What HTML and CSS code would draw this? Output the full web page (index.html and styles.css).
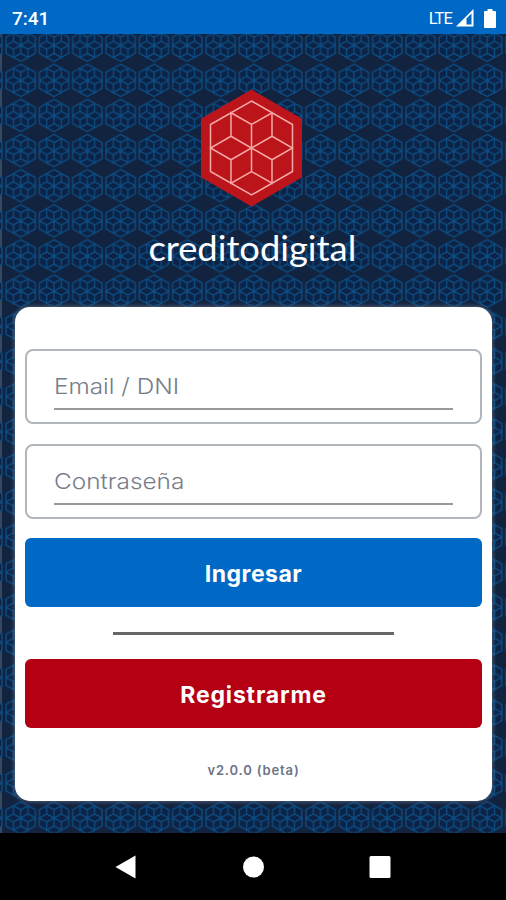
FILE: index.html
```html
<!DOCTYPE html>
<html lang="es">
<head>
<meta charset="utf-8">
<title>creditodigital</title>
<link rel="stylesheet" href="styles.css">
</head>
<body>
<header class="status">
  <span class="clock">7:41</span>
  <span class="network">LTE</span>
  <svg class="signal" width="18" height="18" viewBox="0 0 18 18"><path d="M0 17.5 17.5 0v17.5z" fill="#fff"/><path d="M10.500 9.500 15.500 4.500v11h-5z" fill="#0068c5"/></svg>
  <svg class="battery" width="12" height="19" viewBox="0 0 12 19"><path d="M3.500 0h5v2H11q1 0 1 1v15q0 1-1 1H1q-1 0-1-1V3q0-1 1-1h2.500z" fill="#fff"/></svg>
</header>
<main class="screen">
  <svg class="backdrop" width="506" height="799">
    <defs>
      <pattern id="tiles" x="4" y="-6.300" width="33.320" height="35.120" patternUnits="userSpaceOnUse">
        <path d="M16.700 1.300 31.300 9.400V25.700L16.700 33.800 2.100 25.700V9.400Z" fill="#0c2346"/>
        <path transform="translate(16.700 17.560)" d="M0-16.200 14.600-8.100V8.100L0 16.200-14.600 8.100V-8.100ZM-7.300-12.150 0-8.100 7.300-12.150V-4.050L14.600 0 7.300 4.050V12.150L0 8.100-7.300 12.150V4.050L-14.600 0-7.300-4.050ZM-7.300-4.050 7.300 4.050M7.300-4.050-7.300 4.050M0-8.100V8.100" fill="none" stroke="#0c4d84" stroke-width="1.300"/>
      </pattern>
    </defs>
    <rect width="506" height="799" fill="url(#tiles)"/>
  </svg>
  <svg class="logo" width="103" height="118" viewBox="-51.500 -59 103 118">
    <path d="M0-58.500 50.500-29.200V29.200L0 58.500-50.500 29.200V-29.200Z" fill="#bb151b"/>
    <path d="M0-47 41-23.500V23.500L0 47-41 23.500V-23.500ZM-20.500-35.250 0-23.500 20.500-35.250V-11.750L41 0 20.500 11.750V35.250L0 23.500-20.500 35.250V11.750L-41 0-20.500-11.750ZM-20.500-11.750 20.500 11.750M20.500-11.750-20.500 11.750M0-23.500V23.500" fill="none" stroke="#f5a9a5" stroke-width="1.500"/>
  </svg>
  <h1 class="brand">creditodigital</h1>
  <form class="card">
    <label class="field"><span class="hint"><span class="wide">Email / DNI</span></span></label>
    <label class="field"><span class="hint"><span class="wide">Contraseña</span></span></label>
    <button type="button" class="button login">Ingresar</button>
    <div class="divider"></div>
    <button type="button" class="button register">Registrarme</button>
    <p class="version">v2.0.0 (beta)</p>
  </form>
</main>
<nav class="navigation">
  <svg width="22" height="24" viewBox="0 0 22 24"><path d="M20.500 .5v23L.5 12z" fill="#fff"/></svg>
  <svg width="22" height="22" viewBox="0 0 22 22"><circle cx="11.500" cy="11" r="10.500" fill="#fff"/></svg>
  <svg width="22" height="22" viewBox="0 0 22 22"><rect x=".5" width="21" height="22" rx="1.500" fill="#fff"/></svg>
</nav>
</body>
</html>
```
FILE: styles.css
```css
* { box-sizing: border-box; }
body { margin: 0; width: 506px; height: 900px; overflow: hidden; font-family: Inter, sans-serif; }
.status { height: 34px; background: #0068c5; color: #fff; display: flex; align-items: center; padding: 2px 10px 0 12px; font-family: Roboto, sans-serif; }
.clock { font-size: 19px; font-weight: 500; margin-right: auto; }
.network { font-size: 16.500px; letter-spacing: -.9px; margin-right: 4px; }
.battery { margin-left: 10px; }
.screen { position: relative; height: 799px; background: #12233f; border-left: 2px solid #354860; display: flex; flex-direction: column; align-items: center; }
.backdrop { position: absolute; left: -2px; top: 0; }
.logo { position: relative; margin-top: 55px; margin-right: 5px; }
.brand { position: relative; margin: 19px 4px 0 0; height: 44px; line-height: 44px; color: #fff; font-family: Lato, sans-serif; font-size: 34px; font-weight: 400; transform: scaleX(1.068); }
.card { position: relative; width: 477px; height: 494px; margin: 37px 1px 0 0; padding: 42px 10px 0; background: #fff; border-radius: 15px; box-shadow: 0 0 5px #64758b; display: flex; flex-direction: column; }
.field { height: 75px; margin-bottom: 19.500px; border: 2px solid #b1b5bc; border-radius: 8px; padding: 11px 27px 0; }
.hint { display: block; height: 48px; line-height: 49px; border-bottom: 2px solid #999; color: #777c8b; font-size: 22px; font-weight: 300; }
.wide { display: inline-block; transform: scaleX(1.107); transform-origin: left; }
.button { height: 69px; flex-shrink: 0; padding: 3px 0 0; border: 0; border-radius: 6px; color: #fff; font: 700 23px Inter, sans-serif; }
.login { background: #0068c5; letter-spacing: .5px; }
.divider { width: 281px; height: 3px; background: #666; margin: 25px auto 24px; flex-shrink: 0; }
.register { background: #b50014; letter-spacing: .85px; }
.version { margin: 32px 0 0; text-align: center; line-height: 20px; font-size: 13px; font-weight: 600; letter-spacing: .85px; color: #6d7487; }
.navigation { height: 67px; background: #000; display: flex; justify-content: space-between; align-items: center; padding: 0 115px; }
```
